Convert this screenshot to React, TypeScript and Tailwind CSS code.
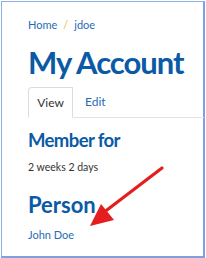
import React from "react";

export default function App() {
  return (
    <div className="relative w-[206px] h-[258px] bg-white" style={{ fontFamily: "Lato, 'Open Sans', sans-serif" }}>
      <div className="absolute left-[1px] top-[1px] w-[204px] h-[257px] border border-[#8fb0e6] border-r-2 border-b-2 border-r-[#7f9fe0] border-b-[#7f9fe0]" />
      <div className="relative pl-[28px] pt-[18px]">
        <div className="flex items-center text-[11px] leading-[14px] text-[#1f6db5]">
          <span>Home</span>
          <span className="mx-[6px] text-[#f2b33a]">/</span>
          <span>jdoe</span>
        </div>
        <h1 className="mt-[12px] text-[31px] leading-[36px] font-bold text-[#0b5aa6] tracking-[-1px]">My Account</h1>
        <div className="mt-[6px] flex items-end border-b border-[#e3e3e3] mr-[2px]">
          <div className="w-[45px] h-[31px] -mb-px bg-white border border-[#dcdcdc] border-b-white rounded-tl-[4px] flex items-center justify-center text-[12px] text-[#333]">View</div>
          <div className="h-[31px] pl-[12px] flex items-center text-[12px] text-[#1f6db5]">Edit</div>
        </div>
        <h2 className="mt-[11px] text-[18.5px] leading-[22px] font-bold text-[#0b5aa6] tracking-[-0.6px]">Member for</h2>
        <p className="mt-[9px] text-[10.5px] leading-[14px] text-[#333]">2 weeks 2 days</p>
        <h2 className="mt-[18px] text-[22px] leading-[26px] font-bold text-[#0b5aa6]">Person</h2>
        <p className="mt-[10px] text-[11px] leading-[14px] text-[#1f6db5]">John Doe</p>
      </div>
      <svg className="absolute left-0 top-0" width="206" height="258" viewBox="0 0 206 258">
        <line x1="162" y1="168" x2="103" y2="213" stroke="#e41e1e" strokeWidth="3.2" strokeLinecap="round" />
        <polygon points="90,226 101,204 114,220" fill="#e41e1e" />
      </svg>
    </div>
  );
}
